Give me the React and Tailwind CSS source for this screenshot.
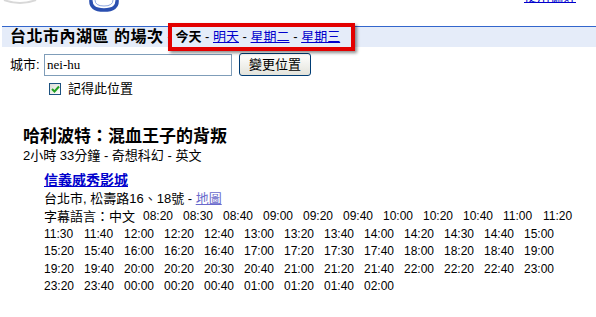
const times = [
  '08:20', '08:30', '08:40', '09:00', '09:20', '09:40', '10:00', '10:20', '10:40', '11:00', '11:20',
  '11:30', '11:40', '12:00', '12:20', '12:40', '13:00', '13:20', '13:40', '14:00', '14:20', '14:30', '14:40', '15:00',
  '15:20', '15:40', '16:00', '16:20', '16:40', '17:00', '17:20', '17:30', '17:40', '18:00', '18:20', '18:40', '19:00',
  '19:20', '19:40', '20:00', '20:20', '20:30', '20:40', '21:00', '21:20', '21:40', '22:00', '22:20', '22:40', '23:00',
  '23:20', '23:40', '00:00', '00:20', '00:40', '01:00', '01:20', '01:40', '02:00',
];

const font = { fontFamily: '"Liberation Sans", "Noto Sans CJK TC", sans-serif' };

function LogoScrap() {
  // only the bottom edge of the logo is left in view
  return (
    <svg width="124" height="12" viewBox="0 0 124 12">
      <path d="M4 0 Q20 6 36 0" fill="none" stroke="#d8d8d8" strokeWidth="2" />
      <path d="M91 0 Q90 10 104 10 Q118 10 117 0" fill="none" stroke="#2a4fb0" strokeWidth="3.5" />
      <path d="M95 0 Q95 6 104 6 Q113 6 113 0" fill="none" stroke="#8fa8e0" strokeWidth="1" />
    </svg>
  );
}

function Check() {
  return (
    <span className="w-[12px] h-[12px] border border-[#1c5180] bg-gradient-to-br from-[#dcdcd6] to-white flex items-center justify-center">
      <svg width="9" height="8" viewBox="0 0 9 8">
        <path d="M1 4 L3.5 6.5 L8 1.5" fill="none" stroke="#21a121" strokeWidth="2" />
      </svg>
    </span>
  );
}

export default function App() {
  return (
    <div className="relative w-[596px] h-[317px] bg-white text-black overflow-hidden" style={font}>
      {/* top strip */}
      <div className="h-[26px] flex justify-between items-start">
        <LogoScrap />
        <a className="text-[13px] leading-[17px] text-[#0000cc] underline -mt-[12px] mr-[20px]">使用偏好</a>
      </div>

      {/* header bar */}
      <div className="ml-[2px] border-t border-[#3366cc] bg-[#e5ecf9] h-[21px] flex items-center pl-[8px] whitespace-nowrap">
        <span className="text-[16px] font-bold tracking-[0.5px] leading-[20px]">台北市內湖區 的場次</span>
        <span className="text-[13px] leading-[20px] ml-[4px]">
          {' - '}<b>今天</b>{' - '}
          <a className="text-[#0000cc] underline">明天</a>{' - '}
          <a className="text-[#0000cc] underline">星期二</a>{' - '}
          <a className="text-[#0000cc] underline">星期三</a>
        </span>
      </div>

      {/* city form */}
      <div className="flex items-center pl-[10px] mt-[6px] text-[13px]">
        <span className="w-[34px]">城市:</span>
        <div className="w-[188px] h-[22px] border border-[#7f9db9] flex items-center px-[2px] text-[13px]" style={{ fontFamily: '"Liberation Serif", serif' }}>nei-hu</div>
        <button className="ml-[7px] w-[72px] h-[23px] border border-[#003c74] rounded-[3px] bg-gradient-to-b from-white to-[#e3e3db] text-[13px] leading-[21px]">變更位置</button>
      </div>
      <div className="flex items-center ml-[49px] mt-[6px] text-[13px] leading-[14px]">
        <Check />
        <span className="ml-[7px]">記得此位置</span>
      </div>

      {/* movie */}
      <div className="pl-[23px] mt-[30px]">
        <div className="text-[17px] font-bold leading-[22px]">哈利波特：混血王子的背叛</div>
        <div className="text-[13px] leading-[16px]">2小時 33分鐘 - 奇想科幻 - 英文</div>
        <div className="pl-[21px] mt-[7px]">
          <a className="block text-[14px] font-bold leading-[18px] text-[#0000cc] underline">信義威秀影城</a>
          <div className="text-[13px] leading-[18px] mt-[1px]">
            台北市, 松壽路16、18號 - <a className="text-[#6a6acc] underline">地圖</a>
          </div>
          <div className="w-[548px] flex flex-wrap text-[12px] leading-[17.5px]">
            <span className="w-[99px] text-[13px]">字幕語言：中文</span>
            {times.map((t, i) => (
              <span key={i} className="w-[40px]">{t}</span>
            ))}
          </div>
        </div>
      </div>

      {/* red annotation box */}
      <div className="absolute left-[168px] top-[23px] w-[187px] h-[28px] border-[4px] border-[#e30000] shadow-[2px_2px_3px_rgba(0,0,0,0.45)]" />
    </div>
  );
}
